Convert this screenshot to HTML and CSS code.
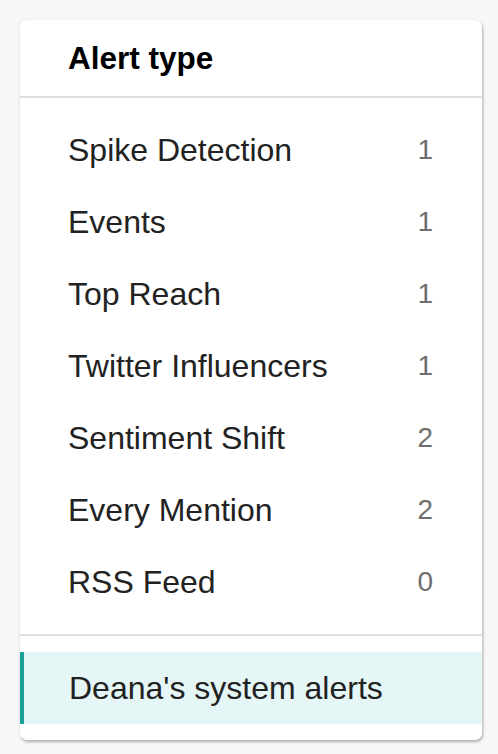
FILE: index.html
```html
<!DOCTYPE html>
<html>
<head>
<meta charset="utf-8">
<link rel="stylesheet" href="styles.css">
</head>
<body>
<div class="card">
  <div class="header">Alert type</div>
  <ul class="list">
    <li class="item"><span>Spike Detection</span><span class="count">1</span></li>
    <li class="item"><span>Events</span><span class="count">1</span></li>
    <li class="item"><span>Top Reach</span><span class="count">1</span></li>
    <li class="item"><span>Twitter Influencers</span><span class="count">1</span></li>
    <li class="item"><span>Sentiment Shift</span><span class="count">2</span></li>
    <li class="item"><span>Every Mention</span><span class="count">2</span></li>
    <li class="item"><span>RSS Feed</span><span class="count">0</span></li>
  </ul>
  <div class="footer">
    <div class="system">Deana's system alerts</div>
  </div>
</div>
</body>
</html>
```
FILE: styles.css
```css
html, body {
  margin: 0;
  padding: 0;
  background: #f8f8f8;
}
body {
  padding: 20px 16px 14px 20px;
  font-family: "Liberation Sans", Arial, sans-serif;
  color: #222;
}
.card {
  width: 462px;
  background: #fff;
  border-radius: 7px;
  box-shadow: 1px 2px 3px rgba(0,0,0,0.28), 0 0 6px rgba(0,0,0,0.04);
  overflow: hidden;
}
.header {
  height: 78px;
  box-sizing: border-box;
  padding-left: 48px;
  display: flex;
  align-items: center;
  font-weight: bold;
  font-size: 31.5px;
  color: #000;
  border-bottom: 2px solid #e0e0e0;
}
.list {
  list-style: none;
  margin: 0;
  padding: 16px 0;
  border-bottom: 2px solid #e0e0e0;
}
.item {
  height: 72px;
  display: flex;
  align-items: center;
  justify-content: space-between;
  padding: 0 49px 0 48px;
  font-size: 32px;
}
.count {
  color: #6e6e6e;
  font-size: 28px;
}
.footer {
  padding: 16px 0;
}
.system {
  height: 72px;
  box-sizing: border-box;
  display: flex;
  align-items: center;
  background: #e4f6f6;
  border-left: 4px solid #1a9e96;
  padding-left: 45px;
  font-size: 32px;
}
```
